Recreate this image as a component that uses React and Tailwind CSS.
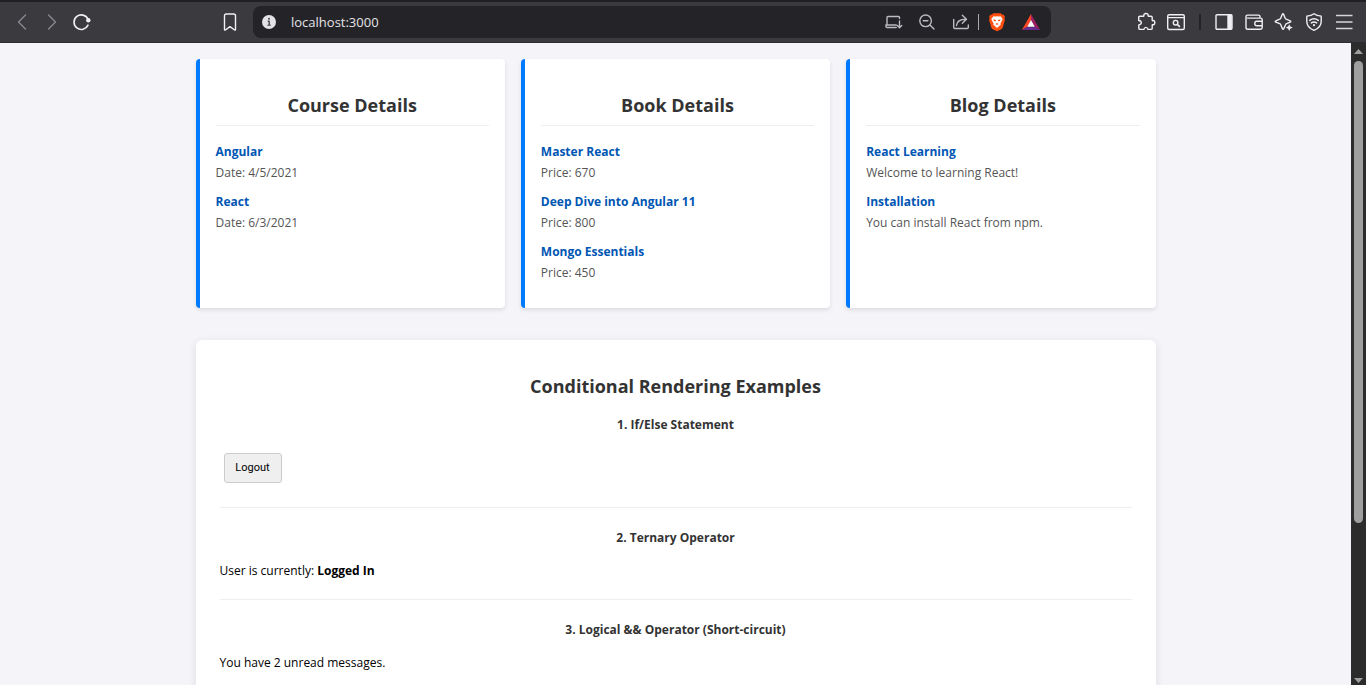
const iconProps = {
  width: 20,
  height: 20,
  viewBox: '0 0 20 20',
  fill: 'none',
  stroke: 'currentColor',
  strokeWidth: 1.4,
  strokeLinecap: 'round',
  strokeLinejoin: 'round',
  'aria-hidden': true,
};

const icons = {
  back: <path d="M13.5 3 6.5 10l7 7" />,
  forward: <path d="M6.5 3l7 7-7 7" />,
  reload: (
    <>
      <path d="M16 7.2A7.3 7.3 0 1 0 16 13.2" strokeWidth="1.6" />
      <circle cx="16.3" cy="8.2" r="2.2" fill="currentColor" stroke="none" />
    </>
  ),
  bookmark: <path d="M4.5 17.6V3.8a1.8 1.8 0 0 1 1.8-1.8h7.4a1.8 1.8 0 0 1 1.8 1.8v13.8c0 .5-.5.7-.9.4L10 14.6 5.4 18c-.4.3-.9.1-.9-.4z" />,
  info: (
    <>
      <circle cx="10" cy="10" r="7" fill="#e3e2e7" stroke="none" />
      <path d="M8.700 9.300H10.200V13.400" stroke="#4a494e" strokeWidth="1.400" strokeLinecap="butt" />
      <path d="M8.300 13.200h3.600" stroke="#4a494e" strokeWidth="1" strokeLinecap="butt" />
      <circle cx="10" cy="6.700" r="1" fill="#4a494e" stroke="none" />
    </>
  ),
  install: (
    <>
      <path d="M4 12.500V5.500a1 1 0 0 1 1-1h10.500a1 1 0 0 1 1 1V6.500" />
      <path d="M2.800 13h10.400M3 13v1.500a1 1 0 0 0 1 1h9.200M16.500 9v6.500M14.300 13.500l2.200 2.200 2.200-2.200" />
    </>
  ),
  zoomOut: (
    <>
      <circle cx="8.600" cy="8.800" r="5.800" />
      <path d="M6.300 8.800h4.600M12.900 13.100l4.100 4" />
    </>
  ),
  share: (
    <>
      <path d="M2.700 7.500V15.500a1 1 0 0 0 1 1h12.600a1 1 0 0 0 1-1V13" />
      <path d="M5.500 13.500c.3-4.500 3.500-6.300 9.500-6.300M11.300 3.300 15.500 7.200l-4.200 4" />
    </>
  ),
  brave: (
    <g stroke="none">
      <path d="M6.300 1.200h7.400l1.500 1.600 1.300-.2 1.400 2.100-.5 1.600.5 1.700-2.200 7.400c-.3 1-1 1.700-1.900 2.200L10 19.200l-3.800-1.600c-.9-.5-1.600-1.200-1.900-2.200L2.100 8l.5-1.700-.5-1.600 1.400-2.100 1.300.2z" fill="#ff4f0f" />
      <path d="M6.500 4.200 8.200 4.600 10 4.200l1.800.4 1.700-.4 2.200 2.900-1.300 2.600-1 1.800.3 1.300-1.500 1.100L10 16l-2.200-2.100-1.500-1.100.3-1.300-1-1.800-1.300-2.600z" fill="#fff" />
      <path d="M6.300 7.300l2.600.7.200 1-2 .2zM13.700 7.300l-2.600.7-.2 1 2 .2zM8.400 12.100l1.600-1 1.600 1-1.600 1z" fill="#ff4f0f" />
    </g>
  ),
  bat: (
    <g stroke="none">
      <path d="M10 2 .9 18 6.300 14.800 10 8.200z" fill="#ff4724" />
      <path d="M10 2l9.100 16-5.400-3.200L10 8.200z" fill="#9e1f63" />
      <path d="M.9 18h18.200l-5.400-3.200H6.300z" fill="#662d91" />
      <path d="M10 8 6.200 14.800h7.600z" fill="#fff" />
    </g>
  ),
  puzzle: (
    <path d="M3.800 4.200h3.600c.5 0 .6-.4.5-.8C7.600 2.300 8.600 1.500 10 1.500s2.400.8 2.100 1.900c-.1.400 0 .8.500.8H15c.7 0 1.200.5 1.200 1.200v2.700c0 .5.400.7.800.5 1.100-.4 1.800.7 1.800 2s-.7 2.500-1.800 2.100c-.4-.2-.8 0-.8.500v3c0 .7-.5 1.200-1.200 1.200h-3.100c-.4-1.700-1-2-2-2s-1.600.3-2 2H4c-.7 0-1.200-.5-1.200-1.200v-3.300C4.800 12.500 5.300 11.800 5.300 10.700S4.800 8.800 2.700 8.500V5.300c0-.6.5-1.100 1.100-1.100z" />
  ),
  searchTab: (
    <>
      <rect x="1.700" y="2.700" width="16.600" height="14.800" rx="1.500" />
      <path d="M2 5.600h16" />
      <circle cx="9.600" cy="10.700" r="2.300" />
      <path d="M11.400 12.500l2 1.900" strokeWidth="1.700" />
    </>
  ),
  sidebar: (
    <>
      <rect x="2" y="2.700" width="16" height="14.600" rx="1" />
      <path d="M13.300 2.700h4.500v14.600h-4.500z" fill="currentColor" stroke="none" />
    </>
  ),
  wallet: (
    <>
      <path d="M16 6V4.600a1.500 1.500 0 0 0-1.500-1.500H3.700a1.700 1.700 0 0 0-1.700 1.700v10.700A1.800 1.800 0 0 0 3.800 17.300h12.700a1.700 1.700 0 0 0 1.700-1.700V7.700a1.600 1.600 0 0 0-1.600-1.600H3.500" />
      <path d="M18 9.300h-5.200a2 2 0 0 0-2 2v.4a2 2 0 0 0 2 2H18" />
    </>
  ),
  sparkle: (
    <>
      <path d="M8.300 2.200c.4-.8 1-.8 1.300 0l1.500 3.900c.2.600.5.900 1.100 1.100l4 1.600c.8.300.8 1 0 1.300l-3.600 1.500c-.6.200-.9.500-1.100 1.100l-1.800 4c-.4.800-1 .8-1.300 0l-1.600-4c-.2-.6-.5-.9-1.100-1.100l-3.900-1.500c-.8-.3-.8-1 0-1.300l3.900-1.600c.6-.2.900-.5 1.100-1.100z" />
      <path d="M15.200 12.200l1.100 2.300 2.500 1.100-2.500 1.100-1.100 2.400-1.100-2.400-2.400-1.100 2.400-1.100z" fill="currentColor" stroke="none" />
    </>
  ),
  shield: (
    <>
      <path d="M10 1.700c1.800 1.400 4 2.200 7.200 2.400v5.400c0 4.100-2.600 7-7.200 8.900-4.600-1.900-7.200-4.800-7.200-8.900V4.100C6 3.900 8.200 3.100 10 1.700z" />
      <path d="M5.700 8.400c2.600-2 6-2 8.600 0M7.300 10.900c1.700-1.200 3.700-1.200 5.400 0" />
      <circle cx="10" cy="13.200" r="1.100" fill="currentColor" stroke="none" />
    </>
  ),
  menu: <path d="M2 3.500h16.500M2 10h16.500M2 16.500h16.500" strokeWidth="1.600" strokeLinecap="butt" />,
};

function ToolButton({ icon, label, className = 'w-[30px] text-[#f0eff4]' }) {
  return (
    <button type="button" aria-label={label} className={`flex h-8 shrink-0 items-center justify-center ${className}`}>
      <svg {...iconProps}>{icons[icon]}</svg>
    </button>
  );
}

function Toolbar() {
  const inBar = 'w-[34px] text-[#bcbbc1]';
  return (
    <header className="flex h-[43px] shrink-0 items-center border-t-2 border-b border-t-[#202024] border-b-[#2d2c30] bg-[#3b3a3f] px-[7px]">
      <ToolButton icon="back" label="Back" className="w-[30px] text-[#89888d]" />
      <ToolButton icon="forward" label="Forward" className="w-[30px] text-[#89888d]" />
      <ToolButton icon="reload" label="Reload" />
      <div className="ml-[118px] flex">
        <ToolButton icon="bookmark" label="Bookmark" />
      </div>
      <div className="mr-20 ml-2 flex h-8 min-w-0 flex-1 items-center rounded-lg bg-[#242328] pr-[3px]">
        <ToolButton icon="info" label="Site information" className="w-8" />
        <input
          type="text"
          aria-label="Address"
          defaultValue="localhost:3000"
          className="ml-1.5 min-w-0 flex-1 bg-transparent pt-0.5 text-[13px] text-[#e4e3e8] outline-none"
        />
        <ToolButton icon="install" label="Install" className={inBar} />
        <ToolButton icon="zoomOut" label="Zoom" className={inBar} />
        <ToolButton icon="share" label="Share" className={inBar} />
        <span className="mr-px h-4 w-px bg-[#aaa9af]" />
        <ToolButton icon="brave" label="Shields" className={inBar} />
        <ToolButton icon="bat" label="Rewards" className={inBar} />
      </div>
      <ToolButton icon="puzzle" label="Extensions" />
      <ToolButton icon="searchTab" label="Search tabs" />
      <span className="mx-2 h-4 w-0.5 bg-[#242328]" />
      <ToolButton icon="sidebar" label="Sidebar" />
      <ToolButton icon="wallet" label="Wallet" />
      <ToolButton icon="sparkle" label="Assistant" />
      <ToolButton icon="shield" label="VPN" />
      <ToolButton icon="menu" label="Menu" className="w-[30px] text-[#d6d5da]" />
    </header>
  );
}

const cards = [
  {
    title: 'Course Details',
    items: [
      ['Angular', 'Date: 4/5/2021'],
      ['React', 'Date: 6/3/2021'],
    ],
  },
  {
    title: 'Book Details',
    items: [
      ['Master React', 'Price: 670'],
      ['Deep Dive into Angular 11', 'Price: 800'],
      ['Mongo Essentials', 'Price: 450'],
    ],
  },
  {
    title: 'Blog Details',
    items: [
      ['React Learning', 'Welcome to learning React!'],
      ['Installation', 'You can install React from npm.'],
    ],
  },
];

function DetailCard({ title, items }) {
  return (
    <section className="rounded-[4px] border-l-4 border-[#007bff] bg-white px-4 pt-8 pb-[17px] shadow-[0_2px_4px_rgba(0,0,0,0.1)]">
      <h2 className="mb-[15px] border-b border-[#eeeeee] pb-1.5 text-center text-[18px] leading-7 font-bold text-[#333333]">
        {title}
      </h2>
      {items.map(([name, detail]) => (
        <div key={name} className="mb-2 leading-[21px]">
          <h3 className="font-bold text-[#0056b3]">{name}</h3>
          <p className="text-[#555555]">{detail}</p>
        </div>
      ))}
    </section>
  );
}

function Example({ title, className = 'pt-5', children }) {
  return (
    <div className={`border-b border-[#eeeeee] pb-[18px] ${className}`}>
      <h3 className="mb-3 text-center leading-5 font-bold text-[#333333]">{title}</h3>
      {children}
    </div>
  );
}

function ScrollTrack() {
  return (
    <div className="flex w-[15px] shrink-0 flex-col items-center bg-[#2c2c2c]" aria-hidden="true">
      <svg width="15" height="18" viewBox="0 0 15 18" className="shrink-0">
        <path d="M3 11 7.500 6 12 11z" fill="#9f9f9f" />
      </svg>
      <div className="h-[72%] w-[9px] rounded-full bg-[#9f9f9f]" />
      <svg width="15" height="12" viewBox="0 0 15 12" className="mt-auto shrink-0">
        <path d="M3 5 7.500 10 12 5z" fill="#9f9f9f" />
      </svg>
    </div>
  );
}

export default function App() {
  return (
    <div className="flex h-screen flex-col font-['Open_Sans','Noto_Sans',sans-serif] text-[12px]">
      <Toolbar />
      <div className="flex min-h-0 flex-1">
        <main className="min-w-0 flex-1 overflow-hidden bg-[#f4f4f9] text-black">
          <div className="mx-auto max-w-[960px] pt-4">
            <div className="grid grid-cols-3 gap-4">
              {cards.map((card) => (
                <DetailCard key={card.title} {...card} />
              ))}
            </div>
            <section className="mt-8 rounded-md bg-white px-6 pt-8 pb-6 shadow-[0_2px_8px_rgba(0,0,0,0.1)]">
              <h2 className="text-center text-[18px] leading-7 font-bold text-[#333333]">
                Conditional Rendering Examples
              </h2>
              <Example title="1. If/Else Statement" className="pt-[15px]">
                <div className="flex px-1 py-1.5">
                  <button
                    type="button"
                    className="h-[30px] w-[58px] rounded-[3px] border border-[#cccccc] bg-[#efefef] font-['Roboto',sans-serif] text-[11px] font-normal"
                  >
                    Logout
                  </button>
                </div>
              </Example>
              <Example title="2. Ternary Operator">
                <p className="leading-[21px]">
                  User is currently: <strong className="font-bold">Logged In</strong>
                </p>
              </Example>
              <Example title="3. Logical && Operator (Short-circuit)">
                <p className="leading-[21px]">You have 2 unread messages.</p>
              </Example>
            </section>
          </div>
        </main>
        <ScrollTrack />
      </div>
    </div>
  );
}
